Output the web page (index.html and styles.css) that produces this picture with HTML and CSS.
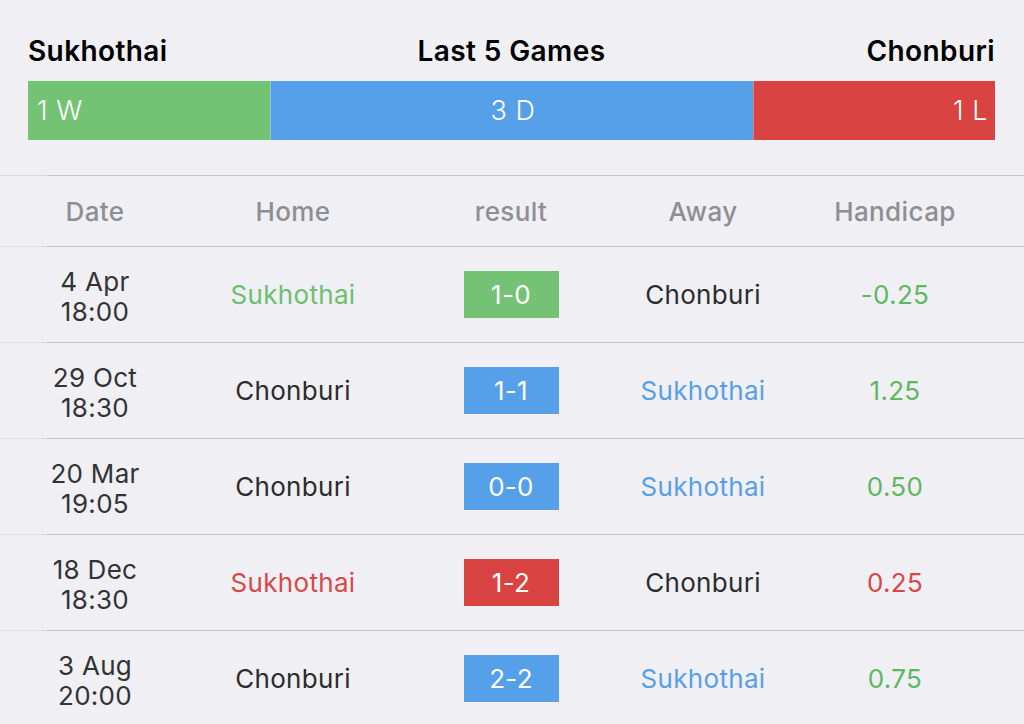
FILE: index.html
```html
<!DOCTYPE html>
<html lang="en">
<head>
<meta charset="utf-8">
<title>Last 5 Games</title>
<link rel="stylesheet" href="styles.css">
</head>
<body>
<div class="page">
  <section class="summary">
    <div class="titles">
      <span class="team">Sukhothai</span>
      <span class="caption">Last 5 Games</span>
      <span class="team team-right">Chonburi</span>
    </div>
    <div class="bar">
      <div class="seg seg-win" style="flex-basis:25%">1 W</div>
      <div class="seg seg-draw" style="flex-basis:50%">3 D</div>
      <div class="seg seg-loss" style="flex-basis:25%">1 L</div>
    </div>
  </section>

  <section class="table">
    <div class="row head">
      <div class="cell">Date</div>
      <div class="cell">Home</div>
      <div class="cell">result</div>
      <div class="cell">Away</div>
      <div class="cell">Handicap</div>
    </div>
    <div class="row">
      <div class="cell date"><span>4 Apr</span><span>18:00</span></div>
      <div class="cell win">Sukhothai</div>
      <div class="cell"><span class="score s-win">1-0</span></div>
      <div class="cell">Chonburi</div>
      <div class="cell hc-win">-0.25</div>
    </div>
    <div class="row">
      <div class="cell date"><span>29 Oct</span><span>18:30</span></div>
      <div class="cell">Chonburi</div>
      <div class="cell"><span class="score s-draw">1-1</span></div>
      <div class="cell draw">Sukhothai</div>
      <div class="cell hc-win">1.25</div>
    </div>
    <div class="row">
      <div class="cell date"><span>20 Mar</span><span>19:05</span></div>
      <div class="cell">Chonburi</div>
      <div class="cell"><span class="score s-draw">0-0</span></div>
      <div class="cell draw">Sukhothai</div>
      <div class="cell hc-win">0.50</div>
    </div>
    <div class="row">
      <div class="cell date"><span>18 Dec</span><span>18:30</span></div>
      <div class="cell loss">Sukhothai</div>
      <div class="cell"><span class="score s-loss">1-2</span></div>
      <div class="cell">Chonburi</div>
      <div class="cell hc-loss">0.25</div>
    </div>
    <div class="row">
      <div class="cell date"><span>3 Aug</span><span>20:00</span></div>
      <div class="cell">Chonburi</div>
      <div class="cell"><span class="score s-draw">2-2</span></div>
      <div class="cell draw">Sukhothai</div>
      <div class="cell hc-win">0.75</div>
    </div>
  </section>
</div>
</body>
</html>
```

FILE: styles.css
```css
* { box-sizing: border-box; }
html, body {
  margin: 0;
  padding: 0;
  background: #efeff4;
}
body {
  font-family: Inter, "Liberation Sans", sans-serif;
  color: #2c2c2e;
  width: 1024px;
  height: 724px;
  overflow: hidden;
}
.summary {
  padding: 33px 29px 35px 28px;
}
.titles {
  display: grid;
  grid-template-columns: 1fr auto 1fr;
  align-items: center;
  height: 36px;
  margin-bottom: 12px;
  font-size: 28px;
  font-weight: 600;
  letter-spacing: 0.4px;
  color: #000;
}
.caption { text-align: center; }
.team-right { text-align: right; }
.bar {
  display: flex;
  height: 59px;
}
.seg {
  flex-grow: 0;
  flex-shrink: 0;
  display: flex;
  align-items: center;
  color: #fff;
  font-size: 27px;
  font-weight: 300;
  letter-spacing: 0.5px;
  padding: 0 7px 0 9px;
}
.seg-win { background: #74c375; }
.seg-draw { background: #56a0ea; justify-content: center; border-left: 1px solid #8fc0ee; }
.seg-loss { background: #d94442; justify-content: flex-end; border-left: 1px solid #e08080; }

.row {
  display: grid;
  grid-template-columns: 190px 206px 230px 154px 230px;
  height: 96px;
  align-items: center;
  background-image: linear-gradient(to right, #dadadf 47px, #c5c5c9 47px);
  background-size: 100% 1px;
  background-repeat: no-repeat;
  background-position: top left;
  padding-top: 1px;
  font-size: 26px;
  letter-spacing: 0.3px;
}
.row.head {
  height: 71px;
  color: #8e8e93;
  font-weight: 500;
  font-size: 26px;
  letter-spacing: 0.4px;
}
.cell {
  text-align: center;
}
.date {
  display: flex;
  flex-direction: column;
  line-height: 30px;
  padding-top: 5px;
  font-size: 26px;
  color: #333336;
}
.win { color: #6cbf6e; }
.draw { color: #58a0e4; }
.loss { color: #d74848; }
.hc-win { color: #5db85f; }
.hc-loss { color: #d74848; }
.score {
  display: inline-flex;
  align-items: center;
  justify-content: center;
  width: 95px;
  height: 47px;
  color: #fff;
  font-size: 26px;
}
.s-win { background: #74c375; }
.s-draw { background: #56a0ea; }
.s-loss { background: #d94442; }
```
